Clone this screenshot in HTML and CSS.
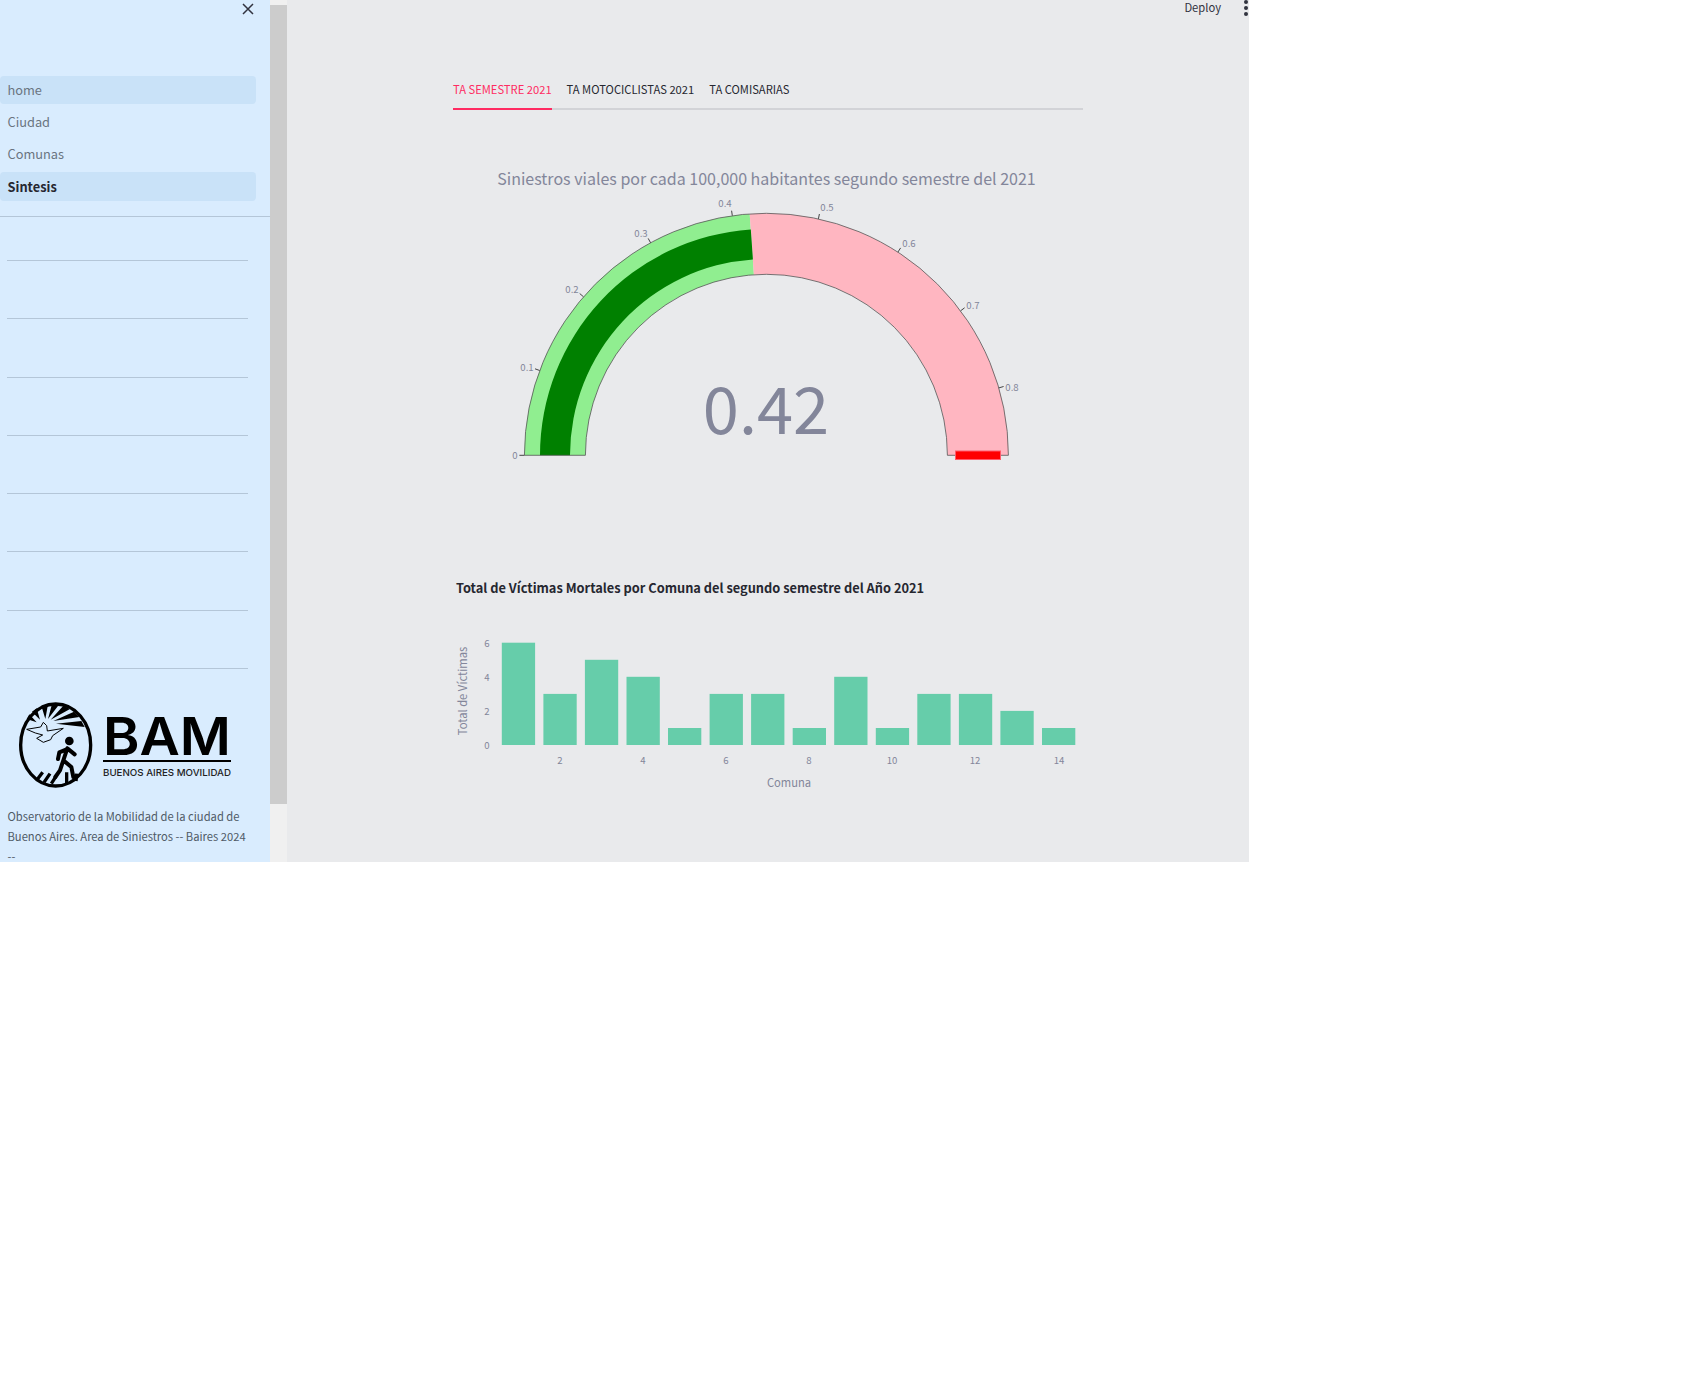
FILE: index.html
```html
<!DOCTYPE html>
<html lang="es">
	<head>
		<meta charset="UTF-8" />
		<meta name="viewport" content="width=device-width, initial-scale=1.0" />
		<title>Sintesis</title>
		<link rel="stylesheet" href="styles.css">
	</head>
	<body>
		<div class="app">
			<aside class="sidebar">
				<button class="close" aria-label="Cerrar">
					<svg width="12" height="12" viewBox="0 0 12 12"><path d="M1 1 L11 11 M11 1 L1 11" /></svg>
				</button>
				<nav class="nav">
					<a class="nav-item shaded">home</a>
					<a class="nav-item">Ciudad</a>
					<a class="nav-item">Comunas</a>
					<a class="nav-item shaded current">Sintesis</a>
				</nav>
				<div class="divider"></div>
				<div class="rules">
					<div class="rule"></div>
					<div class="rule"></div>
					<div class="rule"></div>
					<div class="rule"></div>
					<div class="rule"></div>
					<div class="rule"></div>
					<div class="rule"></div>
					<div class="rule"></div>
				</div>
				<svg class="logo" width="216" height="94" viewBox="18 698 216 94">
					<!-- emblem, drawn in 3x crop coordinates -->
					<g transform="translate(10 695) scale(0.3333)">
						<ellipse cx="137" cy="150" rx="105" ry="123" fill="none" stroke="#000" stroke-width="10" />
						<path d="M106 72 L94 32 L114 28 Z M114 72 L126 27 L148 28 Z M122 74 L160 32 L180 42 Z M130 78 L192 50 L208 66 Z M138 86 L214 78 L224 96 Z M90 74 L66 50 L80 40 Z M80 82 L50 72 L58 58 Z" />
						<path class="dove" d="M50 103 L92 96 L100 82 L110 92 L112 108 L160 100 L128 122 L122 134 L100 142 L80 130 L98 120 L76 114 Z" />
						<circle cx="178" cy="138" r="13" />
						<path class="walker" d="M172 160 L160 196 L184 216 L190 246 M160 196 L150 226 L136 246 M172 160 L194 178 M168 164 L148 172 L144 192" />
						<path class="stripes" d="M80 256 L98 232 M102 262 L120 236 M124 266 L138 244 M170 266 L170 232 M198 258 L200 236" />
					</g>
					<text class="logo-name" x="103" y="755" textLength="128" lengthAdjust="spacingAndGlyphs">BAM</text>
					<rect x="103" y="760" width="128" height="2" />
					<text class="logo-sub" x="103" y="776" textLength="128" lengthAdjust="spacingAndGlyphs">BUENOS AIRES MOVILIDAD</text>
				</svg>
				<p class="caption">Observatorio de la Mobilidad de la ciudad de Buenos Aires. Area de Siniestros -- Baires 2024 --</p>
			</aside>

			<div class="scrollbar"><div class="thumb"></div></div>

			<main class="main">
				<header class="toolbar">
					<span class="deploy">Deploy</span>
					<span class="dots"><i></i><i></i><i></i></span>
				</header>

				<div class="content">
					<div class="tabs">
						<span class="tab active">TA SEMESTRE 2021</span>
						<span class="tab">TA MOTOCICLISTAS 2021</span>
						<span class="tab">TA COMISARIAS</span>
					</div>

					<svg class="gauge" width="630" height="360" viewBox="453 140 630 360">
						<text class="gauge-title" x="766.5" y="185" text-anchor="middle">Siniestros viales por cada 100,000 habitantes segundo semestre del 2021</text>
						<path class="range-low" d="M524.4 455.3 A242 242 0 0 1 749.7 213.9 L753.9 274.7 A181 181 0 0 0 585.4 455.3 Z" />
						<path class="range-high" d="M749.7 213.9 A242 242 0 0 1 1008.4 455.3 L947.4 455.3 A181 181 0 0 0 753.9 274.7 Z" />
						<path class="value-bar" d="M540 455.3 A226.4 226.4 0 0 1 750.8 229.4 L752.9 259.4 A196.4 196.4 0 0 0 570 455.3 Z" />
						<path class="outline" d="M524.4 455.3 A242 242 0 0 1 1008.4 455.3 L947.4 455.3 A181 181 0 0 0 585.4 455.3 Z" />
						<rect class="threshold" x="955.5" y="451" width="45" height="8.5" />
						<path class="tick" d="M519.4 455.3 H524.4 M535 368.8 L539.7 370.5 M579.7 293.5 L583.5 296.8 M648.2 238.4 L650.6 242.8 M731.6 210.7 L732.3 215.7 M819.4 214 L818.4 218.9 M900.6 247.9 L897.9 252.1 M964.6 307.8 L960.6 310.8 M1003.6 386.5 L998.8 387.9" />
						<g class="tick-label" text-anchor="middle">
							<text x="515" y="459">0</text>
							<text x="527" y="371">0.1</text>
							<text x="572" y="293">0.2</text>
							<text x="641" y="237">0.3</text>
							<text x="725" y="207">0.4</text>
							<text x="827" y="211">0.5</text>
							<text x="909" y="247">0.6</text>
							<text x="973" y="309">0.7</text>
							<text x="1012" y="391">0.8</text>
						</g>
						<text class="gauge-value" x="766" y="434" text-anchor="middle">0.42</text>
					</svg>

					<h3 class="chart-title">Total de Víctimas Mortales por Comuna del segundo semestre del Año 2021</h3>

					<svg class="bars" width="630" height="200" viewBox="453 610 630 200">
						<g class="bar">
							<rect x="501.8" y="642.7" width="33.3" height="102.3" />
							<rect x="543.4" y="693.9" width="33.3" height="51.1" />
							<rect x="584.9" y="659.8" width="33.3" height="85.2" />
							<rect x="626.5" y="676.8" width="33.3" height="68.2" />
							<rect x="668" y="728" width="33.3" height="17" />
							<rect x="709.6" y="693.9" width="33.3" height="51.1" />
							<rect x="751.1" y="693.9" width="33.3" height="51.1" />
							<rect x="792.7" y="728" width="33.3" height="17" />
							<rect x="834.2" y="676.8" width="33.3" height="68.2" />
							<rect x="875.8" y="728" width="33.3" height="17" />
							<rect x="917.3" y="693.9" width="33.3" height="51.1" />
							<rect x="958.9" y="693.9" width="33.3" height="51.1" />
							<rect x="1000.4" y="710.9" width="33.3" height="34.1" />
							<rect x="1042" y="728" width="33.3" height="17" />
						</g>
						<g class="tick-label" text-anchor="middle">
							<text x="487" y="647">6</text>
							<text x="487" y="681">4</text>
							<text x="487" y="715">2</text>
							<text x="487" y="749">0</text>
							<text x="560" y="764">2</text>
							<text x="643" y="764">4</text>
							<text x="726" y="764">6</text>
							<text x="809" y="764">8</text>
							<text x="892" y="764">10</text>
							<text x="975" y="764">12</text>
							<text x="1059" y="764">14</text>
						</g>
						<text class="axis-title" x="789" y="787" text-anchor="middle">Comuna</text>
						<text class="axis-title" x="0" y="0" text-anchor="middle" transform="translate(467 691) rotate(-90)">Total de Víctimas</text>
					</svg>
				</div>
			</main>
		</div>
	</body>
</html>
```

FILE: styles.css
```css
body {
	font-family: 'Noto Sans CJK SC', 'Noto Sans', sans-serif;
	background-color: #ffffff;
	color: #262730;
	margin: 0;
	padding: 0;
}

.app {
	display: flex;
	width: 1249px;
	height: 862px;
	overflow: hidden;
}

/* sidebar */
.sidebar {
	position: relative;
	flex: 0 0 270px;
	background-color: #d9ecfe;
	overflow: hidden;
	padding-top: 76px;
	box-sizing: border-box;
}

.close {
	position: absolute;
	top: 3px;
	right: 16px;
	padding: 0;
	border: none;
	background: none;
	line-height: 0;
}

.close path {
	fill: none;
	stroke: #31333f;
	stroke-width: 1.5;
}

.nav {
	display: flex;
	flex-direction: column;
	gap: 4px;
	width: 256px;
}

.nav-item {
	display: block;
	height: 28px;
	line-height: 28px;
	padding-left: 7.5px;
	border-radius: 4px;
	font-size: 12.8px;
	color: #6a7480;
}

.nav-item.shaded {
	background-color: #c9e2f8;
}

.nav-item.current {
	height: 29px;
	line-height: 29px;
	color: #262730;
	font-weight: 600;
}

.divider {
	margin-top: 15px;
	border-top: 1px solid #b4c6d8;
}

.rules {
	margin: 0 22px 0 7px;
}

.rule {
	height: 58.3px;
	box-sizing: border-box;
	border-bottom: 1px solid #b4c6d8;
}

.rule:first-child {
	height: 44px;
}

.logo {
	display: block;
	margin: 29px 0 0 18px;
}

.logo-name {
	font-family: 'Inter', sans-serif;
	font-size: 52px;
	font-weight: 600;
}

.logo-sub {
	font-family: 'Inter', sans-serif;
	font-size: 9.5px;
	font-weight: 500;
	fill: #222222;
}

.dove {
	fill: #d9ecfe;
	stroke: #000000;
	stroke-width: 3;
}

.walker {
	fill: none;
	stroke: #000000;
	stroke-width: 12;
	stroke-linejoin: round;
	stroke-linecap: round;
}

.stripes {
	fill: none;
	stroke: #000000;
	stroke-width: 10;
}

.caption {
	margin: 14px 24px 0 7.5px;
	font-size: 11.2px;
	line-height: 20px;
	color: #4f5a66;
}

/* scrollbar */
.scrollbar {
	flex: 0 0 17px;
	background-color: #f0f0f0;
	padding: 5px 0 58px;
	box-sizing: border-box;
	display: flex;
}

.thumb {
	flex: 1;
	background-color: #cccccc;
}

/* main */
.main {
	flex: 1;
	background-color: #e9eaec;
	position: relative;
}

.toolbar {
	display: flex;
	justify-content: flex-end;
	align-items: center;
	gap: 23px;
	height: 15px;
	padding-right: 1px;
}

.deploy {
	font-size: 11.2px;
	color: #31333f;
	margin-bottom: 2px;
}

.dots {
	display: flex;
	flex-direction: column;
	gap: 2px;
}

.dots i {
	display: block;
	width: 4px;
	height: 4px;
	border-radius: 50%;
	background-color: #31333f;
}

.content {
	width: 630px;
	margin-left: 166px;
}

.tabs {
	display: flex;
	gap: 15px;
	margin-top: 60px;
	height: 33px;
	border-bottom: 2px solid #d2d3d7;
}

.tab {
	height: 35px;
	line-height: 29px;
	font-size: 11.2px;
	color: #262730;
	box-sizing: border-box;
}

.tab.active {
	color: #ff2b62;
	border-bottom: 2px solid #ff2b62;
}

.gauge,
.bars {
	display: block;
}

.gauge {
	margin-top: 30px;
}

.gauge-title {
	font-size: 16px;
	fill: #83869a;
}

.gauge-value {
	font-size: 65px;
	fill: #83869a;
}

.range-low {
	fill: #90ee90;
}

.range-high {
	fill: #ffb6c1;
}

.value-bar {
	fill: #008000;
}

.outline {
	fill: none;
	stroke: #555555;
	stroke-width: 0.8;
}

.threshold {
	fill: #ff0000;
	stroke: #ff5a6a;
	stroke-width: 1;
}

.tick {
	fill: none;
	stroke: #444444;
	stroke-width: 1;
}

.tick-label {
	font-size: 9.6px;
	fill: #83869a;
}

.chart-title {
	margin: 78px 0 0 3px;
	font-size: 12.8px;
	font-weight: 700;
	line-height: 20px;
	color: #262730;
}

.bars {
	margin-top: 12px;
}

.bar rect {
	fill: #66cdaa;
}

.axis-title {
	font-size: 11.2px;
	fill: #83869a;
}
```
